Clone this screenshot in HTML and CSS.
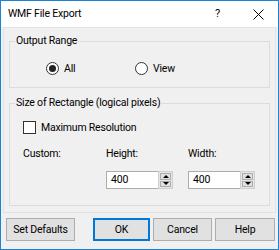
FILE: index.html
```html
<!DOCTYPE html>
<html>
<head>
<meta charset="utf-8">
<link rel="stylesheet" href="styles.css">
</head>
<body>
<div class="window">
  <div class="titlebar">
    <span class="title">WMF File Export</span>
    <span class="tb-help">?</span>
    <span class="tb-close"><svg width="11" height="11" viewBox="0 0 11 11"><path d="M0.5 0.5 L10.5 10.5 M10.5 0.5 L0.5 10.5" stroke="#000" stroke-width="1" fill="none"/></svg></span>
  </div>
  <div class="panel">
    <fieldset class="group group-range">
      <legend>Output Range</legend>
      <div class="radios">
        <label class="radio radio-all"><span class="radio-dot checked"></span>All</label>
        <label class="radio radio-view"><span class="radio-dot"></span>View</label>
      </div>
    </fieldset>
    <fieldset class="group group-size">
      <legend>Size of Rectangle (logical pixels)</legend>
      <div class="size-body">
        <label class="check"><span class="box"></span>Maximum Resolution</label>
        <div class="custom-grid">
          <span>Custom:</span>
          <span>Height:</span>
          <span>Width:</span>
          <span></span>
          <div class="spin">
            <span class="spin-edit">400</span>
            <span class="spin-btns"><span class="sb up"></span><span class="sb down"></span></span>
          </div>
          <div class="spin">
            <span class="spin-edit">400</span>
            <span class="spin-btns"><span class="sb up"></span><span class="sb down"></span></span>
          </div>
        </div>
      </div>
    </fieldset>
  </div>
  <div class="buttons">
    <button class="btn btn-defaults">Set Defaults</button>
    <button class="btn btn-ok">OK</button>
    <button class="btn btn-cancel">Cancel</button>
    <button class="btn btn-help">Help</button>
  </div>
</div>
</body>
</html>
```
FILE: styles.css
```css
* { box-sizing: border-box; }
html, body { margin: 0; padding: 0; background: #f0f0f0; }
body {
  font-family: Roboto, "Noto Sans", sans-serif;
  font-size: 10.5px;
  letter-spacing: -0.2px;
  color: #000;
}
.window {
  width: 279px;
  height: 250px;
  border: 1px solid #1a83d6;
  background: #f0f0f0;
  display: flex;
  flex-direction: column;
}
.titlebar {
  height: 26px;
  background: #ffffff;
  display: flex;
  align-items: center;
  padding-left: 7px;
  line-height: 16px;
}
.title { flex: 1; }
.tb-help { width: 12px; margin-right: 26px; font-size: 11px; }
.tb-close { width: 11px; height: 11px; margin-right: 14px; display: flex; }
.panel {
  margin: 0 2px;
  border: 1px solid #e2e2e2;
  padding: 5px 5px 4px 5px;
  height: 186px;
}
.group {
  margin: 0;
  padding: 0;
  border: 1px solid #dcdcdc;
  min-width: 0;
}
.group legend {
  padding: 0 1px;
  margin-left: 5px;
  line-height: 16px;
}
.group-range { padding: 11px 0 11px 0; }
.radios { display: flex; height: 16px; align-items: center; }
.radio { display: flex; align-items: center; }
.radio-all { margin-left: 36px; width: 89px; }
.radio-dot {
  width: 13px; height: 13px;
  border: 1px solid #333;
  border-radius: 50%;
  background: #fff;
  margin-right: 5px;
  display: flex; align-items: center; justify-content: center;
}
.radio-dot.checked::after {
  content: "";
  width: 7px; height: 7px; border-radius: 50%; background: #222;
}
.group-size { margin-top: 7px; padding: 8px 0 16px 0; }
.size-body { padding-left: 13px; }
.check { display: flex; align-items: center; height: 16px; }
.box {
  width: 13px; height: 13px; border: 1px solid #333; background: #fff;
  margin-right: 5px;
}
.custom-grid {
  margin-top: 11px;
  display: grid;
  grid-template-columns: 83px 82px 67px;
  grid-template-rows: 16px 18px;
  row-gap: 9px;
  line-height: 16px;
}
.spin { display: flex; height: 18px; width: 67px; }
.spin-edit {
  flex: 1;
  background: #fff;
  border: 1px solid #adadad;
  border-right: none;
  padding-left: 4px;
  line-height: 16px;
}
.spin-btns {
  width: 15px;
  border: 1px solid #cfcfcf;
  background: #e6e6e6;
  display: flex; flex-direction: column;
  padding: 1px;
  gap: 1px;
}
.sb {
  flex: 1;
  background: #e1e1e1;
  border: 1px solid #adadad;
  display: flex; align-items: center; justify-content: center;
}
.sb::after {
  content: "";
  width: 0; height: 0;
  border-left: 3px solid transparent;
  border-right: 3px solid transparent;
}
.sb.up::after { border-bottom: 3px solid #000; }
.sb.down::after { border-top: 3px solid #000; }
.buttons {
  display: flex;
  padding: 5px 0 0 5px;
}
.btn {
  font: inherit;
  letter-spacing: inherit;
  color: #000;
  height: 23px;
  background: #e1e1e1;
  border: 1px solid #adadad;
  padding: 0;
  margin: 0;
  white-space: nowrap;
}
.btn-defaults { width: 69px; margin-right: 18px; }
.btn-ok { width: 57px; margin-right: 3px; border: 2px solid #0078d7; }
.btn-cancel { width: 59px; margin-right: 3px; }
.btn-help { width: 60px; }
```
